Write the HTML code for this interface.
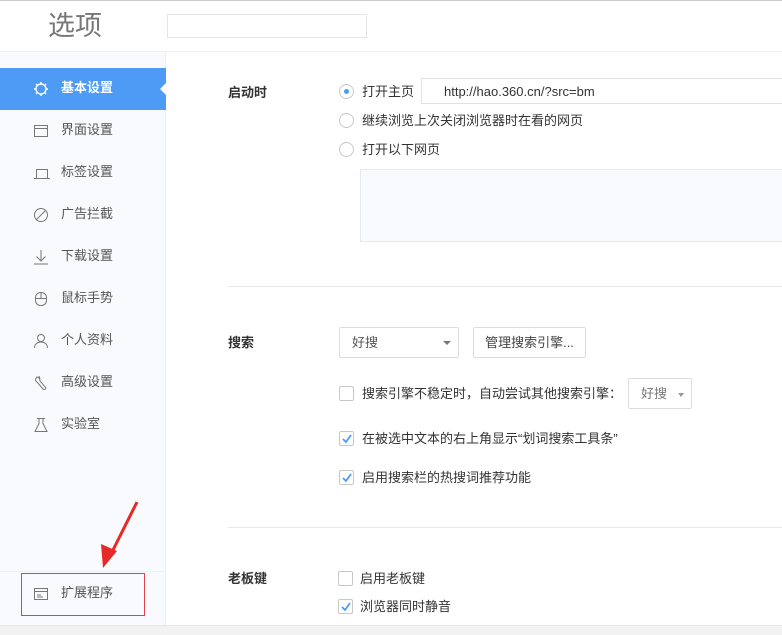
<!DOCTYPE html>
<html><head><meta charset="utf-8"><style>
*{margin:0;padding:0;box-sizing:border-box}
body{width:782px;height:635px;overflow:hidden;background:#fff;font-family:"Liberation Sans","Noto Sans CJK SC",sans-serif;font-size:13px;color:#333;position:relative}
.a{position:absolute}
.side{left:0;top:52px;width:166px;height:573px;background:#f8fafd;border-right:1px solid #eceff3}
.item{position:absolute;left:0;width:166px;height:42px;line-height:40px;padding-left:61px;color:#555;font-size:13px}
.item svg{position:absolute;left:33px;top:13px}
.act{background:#4d9bf5;color:#fff;font-weight:bold}
.lbl{font-weight:bold;font-size:13px;color:#333;line-height:15px}
.radio{width:15px;height:15px;border:1px solid #c8c8c8;border-radius:50%;background:#fff}
.cb{width:15px;height:15px;border:1px solid #c8c8c8;border-radius:2px;background:#fff}
.txt{font-size:13px;color:#333;line-height:15px}
.hr{height:1px;background:#e8e8e8;left:228px;width:554px}
</style></head><body>
<div class="a" style="left:0;top:0;width:782px;height:1px;background:#ccc"></div>
<div class="a" style="left:48px;top:8px;font-size:27px;color:#777;line-height:36px">选项</div>
<div class="a" style="left:167px;top:14px;width:200px;height:24px;border:1px solid #e4e4e4"></div>
<div class="a" style="left:0;top:51px;width:782px;height:1px;background:#eef0f3"></div>
<div class="a side">
 <div class="item act" style="top:16px"><svg width="16" height="16" viewBox="0 0 16 16" fill="none" stroke="#fff" stroke-width="1.4"><circle cx="8" cy="8" r="5"/><path d="M8 1v2M8 13v2M1 8h2M13 8h2M3 3l1.5 1.5M11.5 11.5L13 13M3 13l1.5-1.5M11.5 4.5L13 3"/></svg>基本设置</div>
 <div class="a" style="left:160px;top:30px;width:0;height:0;border-top:7px solid transparent;border-bottom:7px solid transparent;border-right:7px solid #fff"></div>
 <div class="item" style="top:58px"><svg width="16" height="16" viewBox="0 0 16 16" fill="none" stroke="#777"><rect x="1.5" y="2.5" width="13" height="11"/><path d="M1.5 5.5h13"/></svg>界面设置</div>
 <div class="item" style="top:100px"><svg width="18" height="16" viewBox="0 0 18 16" fill="none" stroke="#777"><path d="M3.5 13V4.5h11V13M1 13.5h16"/></svg>标签设置</div>
 <div class="item" style="top:142px"><svg width="16" height="16" viewBox="0 0 16 16" fill="none" stroke="#777"><circle cx="8" cy="8" r="6.5"/><path d="M3.5 12.5l9-9"/></svg>广告拦截</div>
 <div class="item" style="top:184px"><svg width="16" height="16" viewBox="0 0 16 16" fill="none" stroke="#777"><path d="M8 1v11M3.5 7.5L8 12l4.5-4.5M1 15h14"/></svg>下载设置</div>
 <div class="item" style="top:226px"><svg width="16" height="16" viewBox="0 0 16 16" fill="none" stroke="#777"><rect x="2.5" y="1.5" width="11" height="13" rx="5"/><path d="M2.5 7.5h11M8 1.5v6"/></svg>鼠标手势</div>
 <div class="item" style="top:268px"><svg width="16" height="16" viewBox="0 0 16 16" fill="none" stroke="#777"><circle cx="8" cy="5" r="3.5"/><path d="M1.5 15c0-4 3-6 6.5-6s6.5 2 6.5 6"/></svg>个人资料</div>
 <div class="item" style="top:310px"><svg width="16" height="16" viewBox="0 0 16 16" fill="none" stroke="#777"><path d="M4 2c-2 2-2 4 0 5l6 7c1 1 3 0 3-1l-6-7c0-2-1-4-3-4zM6 1l1 3"/></svg>高级设置</div>
 <div class="item" style="top:352px"><svg width="16" height="16" viewBox="0 0 16 16" fill="none" stroke="#777"><path d="M4 1.5h8M6 1.5v5l-4 8h12l-4-8v-5"/></svg>实验室</div>
 <div class="a" style="left:0;top:519px;width:166px;height:1px;background:#eceff3"></div>
 <div class="item" style="top:521px"><svg width="16" height="16" viewBox="0 0 16 16" fill="none" stroke="#777"><rect x="1.5" y="2.5" width="13" height="11"/><path d="M1.5 5.5h13M4 9h4M4 11h6"/></svg>扩展程序</div>
</div>
<div class="a" style="left:21px;top:573px;width:124px;height:43px;border:1.5px solid #e5404f"></div>
<svg class="a" style="left:95px;top:498px" width="50" height="75" viewBox="0 0 50 75"><path d="M42 4L16 56" stroke="#e8292c" stroke-width="3" fill="none"/><path d="M8 70L6 46L22 53Z" fill="#e8292c"/></svg>

<div class="a lbl" style="left:228px;top:85px">启动时</div>
<div class="a radio" style="left:339px;top:84px"></div><div class="a" style="left:344px;top:89px;width:5px;height:5px;border-radius:50%;background:#4d9bf5"></div>
<div class="a txt" style="left:362px;top:84px">打开主页</div>
<div class="a" style="left:421px;top:78px;width:370px;height:26px;border:1px solid #e2e2e2"></div>
<div class="a txt" style="left:444px;top:84px;color:#333">http://hao.360.cn/?src=bm</div>
<div class="a radio" style="left:339px;top:113px"></div><div class="a txt" style="left:362px;top:113px">继续浏览上次关闭浏览器时在看的网页</div>
<div class="a radio" style="left:339px;top:142px"></div><div class="a txt" style="left:362px;top:142px">打开以下网页</div>
<div class="a" style="left:360px;top:169px;width:430px;height:73px;border:1px solid #e6e9ee;background:#f8fafd"></div>
<div class="a hr" style="top:286px"></div>

<div class="a lbl" style="left:228px;top:335px">搜索</div>
<div class="a" style="left:339px;top:327px;width:120px;height:31px;border:1px solid #ddd;border-radius:2px"></div>
<div class="a txt" style="left:352px;top:335px;color:#555">好搜</div>
<div class="a" style="left:443px;top:341px;border-left:4px solid transparent;border-right:4px solid transparent;border-top:4px solid #777"></div>
<div class="a" style="left:473px;top:327px;width:113px;height:31px;border:1px solid #ddd;border-radius:2px;text-align:center;line-height:29px;color:#444">管理搜索引擎...</div>
<div class="a cb" style="left:339px;top:386px"></div><div class="a txt" style="left:362px;top:386px">搜索引擎不稳定时，自动尝试其他搜索引擎：</div>
<div class="a" style="left:628px;top:378px;width:64px;height:31px;border:1px solid #ddd;border-radius:2px"></div>
<div class="a txt" style="left:641px;top:386px;color:#777">好搜</div>
<div class="a" style="left:678px;top:393px;border-left:3.5px solid transparent;border-right:3.5px solid transparent;border-top:4px solid #999"></div>
<div class="a cb" style="left:339px;top:431px"></div><svg class="a" style="left:341px;top:433px" width="12" height="12"><path d="M2 6l3 3 5-7" stroke="#4d9bf5" stroke-width="1.8" fill="none"/></svg>
<div class="a txt" style="left:362px;top:431px">在被选中文本的右上角显示“划词搜索工具条”</div>
<div class="a cb" style="left:339px;top:470px"></div><svg class="a" style="left:341px;top:472px" width="12" height="12"><path d="M2 6l3 3 5-7" stroke="#4d9bf5" stroke-width="1.8" fill="none"/></svg>
<div class="a txt" style="left:362px;top:470px">启用搜索栏的热搜词推荐功能</div>
<div class="a hr" style="top:527px"></div>

<div class="a lbl" style="left:228px;top:571px">老板键</div>
<div class="a cb" style="left:338px;top:571px"></div><div class="a txt" style="left:360px;top:571px">启用老板键</div>
<div class="a cb" style="left:338px;top:599px"></div><svg class="a" style="left:340px;top:601px" width="12" height="12"><path d="M2 6l3 3 5-7" stroke="#4d9bf5" stroke-width="1.8" fill="none"/></svg>
<div class="a txt" style="left:360px;top:599px">浏览器同时静音</div>
<div class="a" style="left:0;top:625px;width:782px;height:10px;background:#f2f2f2;border-top:1px solid #e6e6e6"></div>
</body></html>
